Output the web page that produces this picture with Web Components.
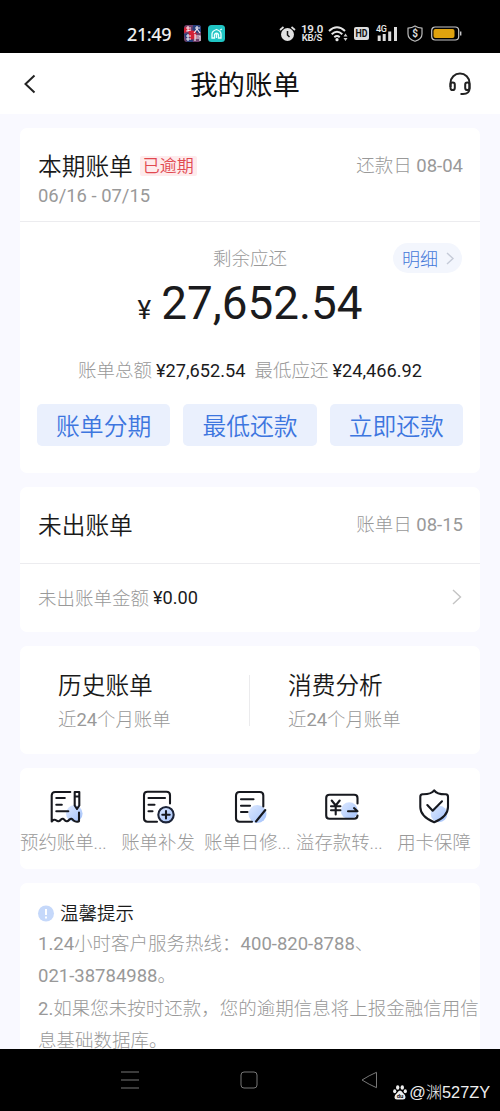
<!DOCTYPE html>
<html lang="zh-CN">
<head>
<meta charset="utf-8">
<title>我的账单</title>
<style>
html,body{margin:0;padding:0}
body{width:500px;height:1111px;overflow:hidden;background:#f9f9ff;font-family:Roboto,"Noto Sans CJK SC",sans-serif;font-size:18.5px;font-weight:300;color:#1c1c1e}
</style>
</head>
<body>
<bill-app></bill-app>
<script>
const define = (name, css, html) => customElements.define(name, class extends HTMLElement {
  constructor() {
    super();
    const t = document.createElement('template');
    t.innerHTML = `<style>*{box-sizing:border-box}svg{display:block;flex:none;overflow:visible}i{font-style:normal;font-weight:400}${css}</style>` + (typeof html === 'function' ? html(this) : html);
    this.attachShadow({mode: 'open'}).appendChild(t.content.cloneNode(true));
  }
});
// Latin digits take the regular weight beside the lighter Chinese text.
const num = s => s.replace(/\d[\d.\/-]*/g, m => `<i>${m}</i>`);

define('status-bar', `
:host{display:flex;align-items:center;height:53px;flex:none;background:#000;color:#e6e6e6;padding:14px 0 0 127px}
.time{font:500 18px/20px "Noto Sans",sans-serif;width:57px;color:#eee;letter-spacing:-.4px}
.speed{text-align:center;width:22px;margin-left:5px;font-family:Roboto,sans-serif}
.speed b{display:block;font-weight:600;font-size:11.500px;line-height:9px;height:9px;letter-spacing:-.2px}.speed b+b{font-size:9.500px;line-height:8px;height:8px;letter-spacing:-.3px}
.speed b{white-space:nowrap}
`, `
<span class="time">21:49</span>
<svg width="17" height="17" viewBox="0 0 17 17"><rect width="17" height="17" rx="3" fill="#70406c"/><path d="M9 0h5a3 3 0 0 1 3 3v4L8 9zM0 9l8-1 1 9H3z" fill="#263f7c"/><path d="M4 5l8 1 1 7-7 2zM0 3l4-2 3 4-7 3z" fill="#d31f35"/><path d="M2 3h5M4 1v6M2 6l5-1M11 3h5M13 1v3l-3 4m3-4 3 4M2 11h5M4 9v7m-2-2h5M11 11h5v5m-5-3h4m-4 3V9" stroke="#f1e9f1" stroke-width="1.2" fill="none"/></svg>
<svg style="margin-left:7px" width="17" height="17" viewBox="0 0 17 17"><rect width="17" height="17" rx="3.5" fill="#20c5c4"/><path d="M4 13V9q0-3 4.500-4.500Q13 6 13 9v4H10.500V9.500Q8.500 7 6.500 9.500V13zM8.500 8v5M12 5l2-1" fill="none" stroke="#e9ffff" stroke-width="1.300"/></svg>
<svg style="margin-left:54px" width="17" height="17" viewBox="0 0 17 17"><circle cx="8.500" cy="9.500" r="6.500" fill="#e0e0e0"/><path d="M1 5l3.500-3M16 5l-3.500-3" stroke="#e0e0e0" stroke-width="1.700"/><path d="M8.500 6v4l2 2" fill="none" stroke="#111" stroke-width="1.500"/></svg>
<span class="speed"><b>19.0</b><b>KB/S</b></span>
<svg style="margin-left:5px" width="21" height="17" viewBox="0 0 21 17"><path d="M1 6q8-7.500 16 0M3.700 9.200q5.300-5 10.600 0M6.300 12.200q2.700-2.400 5.400 0" fill="none" stroke="#e6e6e6" stroke-width="2"/><circle cx="9" cy="14.700" r="1.600" fill="#e6e6e6"/><path d="M15.500 11.500l2-3 2 3zM15.500 13l2 3 2-3z" fill="#ccc"/></svg>
<svg style="margin-left:5px" width="15" height="13" viewBox="0 0 15 13"><rect width="15" height="13" rx="2" fill="#ddd"/><text x="7.500" y="10.200" text-anchor="middle" textLength="12" lengthAdjust="spacingAndGlyphs" font-family="Roboto" font-weight="700" font-size="10" fill="#111">HD</text></svg>
<svg style="margin-left:7px" width="23" height="17" viewBox="0 0 23 17"><text x="0" y="7" font-family="Roboto" font-size="9" font-weight="500" fill="#e6e6e6" textLength="11">4G</text><path d="M3.200 10.500V16M8.200 9V16M13.700 6.500V16M19.500 2V16" stroke="#ddd" stroke-width="3"/></svg>
<svg style="margin-left:8px" width="16" height="17" viewBox="0 0 16 17"><path d="M8 1Q11 3 15 3.200V9q0 5-7 7.300Q1 14 1 9V3.200Q5 3 8 1z" fill="none" stroke="#bbb" stroke-width="1.200"/><text x="8" y="12.300" text-anchor="middle" font-family="Roboto" font-weight="700" font-size="10" fill="#ddd">$</text></svg>
<svg style="margin-left:8px" width="31" height="15" viewBox="0 0 31 15"><rect x=".7" y="1" width="27" height="13" rx="3.500" fill="none" stroke="#c6c6c8" stroke-width="1.200"/><rect x="2.500" y="3" width="21" height="9" rx="2" fill="#dfa20e"/><path d="M29.700 5.500v4" stroke="#c6c6c8" stroke-width="1.400"/></svg>
`);

define('title-bar', `
:host{display:flex;align-items:center;justify-content:space-between;flex:none;height:61px;padding:0 28px 0 24px;background:#fff}
h1{margin:0;font:400 27.4px/40px "Noto Sans CJK SC",sans-serif;color:#111;padding:0 0 1px 6px}
`, `
<svg width="12" height="20" viewBox="0 0 12 20"><path d="M10.500 1.500L1.500 10l9 8.500" fill="none" stroke="#222" stroke-width="2"/></svg>
<h1>我的账单</h1>
<svg width="24" height="24" viewBox="0 0 24 24" fill="none" stroke="#222" stroke-width="2"><path d="M2.500 15V11a9.500 9.500 0 0 1 19 0v5.500q0 5.500-6.500 5.500h-2.500"/><rect x="2.500" y="10.500" width="4.300" height="7.500" rx="2.100"/><rect x="17.200" y="10.500" width="4.300" height="7.500" rx="2.100"/></svg>
`);

define('bill-card', `
:host{display:block;background:#fff;border-radius:7px;margin-bottom:14px;flex:none;overflow:hidden}
`, `<slot></slot>`);

define('card-head', `
:host{display:flex;justify-content:space-between;padding:0 17px 0 18px;border-bottom:1px solid #ececef}
.l{display:flex}h2{margin:0;font:350 23.700px/34px "Noto Sans CJK SC",sans-serif;color:#1a1a1a}
.r{font-size:18.500px;line-height:34px;color:#999;padding-top:1px}
`, e => `<div class="l"><h2>${e.getAttribute('heading')}</h2><slot></slot></div><span class="r">${num(e.getAttribute('note'))}</span>`);

define('overdue-tag', `
:host{display:block;height:20px;margin:8px 0 0 7px;padding:0 3px;background:#feebec;color:#e1484f;font-size:17px;line-height:20px;border-radius:2px;font-weight:350}
`, `<slot></slot>`);

define('current-bill', `
:host{display:block;height:345px}
card-head{height:94px;padding-top:20px;position:relative}
.range{position:absolute;left:18px;top:56px;line-height:24px;font-size:18.400px;color:#999}
.due{display:grid;grid-template-columns:1fr auto 1fr;align-items:center;height:30px;margin:21px 18px 0 18px}
.due .t{grid-column:2;color:#999;margin-top:-2px}
.pill{justify-self:end;display:flex;align-items:center;width:69px;height:30px;border-radius:15px;background:#f3f6fd;color:#4478d9;padding:0 8px 0 9px;justify-content:space-between}
.pill span{font-size:18px}
.amount{display:flex;justify-content:center;align-items:baseline;gap:10px;height:54px;font-weight:400;font-size:45.800px;line-height:54px;margin-top:4px;color:#1b1b1d}
.amount small{font-size:26px}
.sum{display:flex;justify-content:center;white-space:pre;line-height:26px;color:#999;margin-top:27px}
.sum b{font-weight:400;color:#1b1b1d;font-size:18.200px;margin:0 9px 0 4px}.sum b:last-child{margin-right:0}
.acts{display:grid;grid-template-columns:repeat(3,1fr);gap:13px;margin:20px 17px 0 17px}
.acts span{height:42px;border-radius:5px;background:#eaf0fd;color:#3d76df;text-align:center;font-size:23.800px;line-height:47px;font-weight:350}
`, `
<card-head heading="本期账单" note="还款日 08-04"><overdue-tag>已逾期</overdue-tag><span class="range"><i>06/16 - 07/15</i></span></card-head>
<div class="due"><span class="t">剩余应还</span><div class="pill"><span>明细</span><svg width="8" height="13" viewBox="0 0 8 13"><path d="M1 1l6 5.500L1 12" fill="none" stroke="#c5cbd8" stroke-width="1.400"/></svg></div></div>
<div class="amount"><small>¥</small><span>27,652.54</span></div>
<div class="sum"><span>账单总额</span><b>¥27,652.54</b><span>最低应还</span><b>¥24,466.92</b></div>
<div class="acts"><span>账单分期</span><span>最低还款</span><span>立即还款</span></div>
`);

define('pending-bill', `
:host{display:block;height:145px}
card-head{height:77px;padding-top:20px}
.row{display:flex;align-items:center;height:68px;padding:0 18px 2px;color:#999}
b{font-weight:400;color:#1b1b1d;font-size:18.200px;margin:0 auto 0 4px}
`, `
<card-head heading="未出账单" note="账单日 08-15"></card-head>
<div class="row"><span>未出账单金额</span><b>¥0.00</b><svg width="10" height="16" viewBox="0 0 10 16"><path d="M1 1l7.500 7L1 15" fill="none" stroke="#c4c4c4" stroke-width="1.400"/></svg></div>
`);

define('bill-links', `
:host{display:grid;grid-template-columns:1fr 1fr;height:108px;padding-top:21px}
div{padding-left:38px}div+div{position:relative}
div+div::before{content:"";position:absolute;left:-1px;top:8px;width:1px;height:51px;background:#ebebed}
h3{margin:0;font:350 23.700px/34px "Noto Sans CJK SC",sans-serif;color:#1a1a1a}
p{margin:6px 0 0;line-height:26px;font-size:18.400px;color:#999}
`, `<div><h3>历史账单</h3><p>${num('近24个月账单')}</p></div><div><h3>消费分析</h3><p>${num('近24个月账单')}</p></div>`);

const glyphs = {
  reserve: `<circle cx="26.300" cy="25.500" r="8.300"/><path d="M22.300 4H7.200Q3.700 4 3.700 7.500V33.500Q6 30.500 8.500 32.500Q10.500 34.500 13 31.500Q15 29.500 17 32.500Q19 34.500 21.500 31.500Q23.500 29.500 25.500 32.500Q28 34.500 31 33.300V24.500M8.300 10h8.500M8.300 16.700h5.500M8.300 23.300h12M26.700 4h4.600v13.500l-2.300 3.500-2.300-3.500zM26.700 8.500h4.600"/>`,
  reissue: `<circle cx="26" cy="26.700" r="7.700"/><path d="M17 33.700H7.500Q4 33.700 4 30.200V7.200Q4 3.700 7.500 3.700H26.500Q30 3.700 30 7.200V15.500M8.500 10H25M8.500 16.700h6M8.500 23.300h4M26 23v7.400M22.300 26.700h7.400"/><circle cx="26" cy="26.700" r="7.700" style="fill:none;stroke:#1c2438"/>`,
  edit: `<circle cx="25.500" cy="26" r="9"/><path d="M20 33.700H7.500Q4 33.700 4 30.200V7.500Q4 4 7.500 4H27.800Q31.300 4 31.300 7.500V18.500M9 11.300H21.500M9 17.700h9M9 24h6.500M24 33.500L33.300 22"/>`,
  transfer: `<circle cx="25.300" cy="22.700" r="8.500"/><path d="M33.500 15.500V10Q33.500 6.700 30.200 6.700H5.500Q2.200 6.700 2.200 10V27.400Q2.200 30.700 5.500 30.700H30.200Q33.500 30.700 33.500 27.500M7.700 12.500l4 5 4-5M11.700 17.500V26.500M7 18.300h9.400M7 22.200h9.400M24 23.300h9.500l-3.500-3.200"/>`,
  shield: `<circle cx="23" cy="26" r="8.300"/><path d="M18.200 2.300Q15.500 6.500 6.500 6.300Q4.300 6.500 4.300 8.700V19Q4.300 28.500 18.200 34.300Q32 28.500 32 19V8.700Q32 6.500 29.800 6.300Q21 6.500 18.200 2.300zM11.300 17l5.400 5.700L26 13.300"/>`
};
define('service-item', `
:host{display:flex;flex-direction:column;min-width:0;padding-top:20px}
svg{align-self:center}circle{fill:url(#g);stroke:none}path{fill:none;stroke:#17191f;stroke-linecap:round;stroke-linejoin:round}
circle,path{stroke-width:2.100}
span{font-size:18.400px;line-height:26px;margin-top:6px;white-space:nowrap;color:#999;text-align:center}
:host([long]) span{text-align:left}
`, e => `<svg width="36" height="36" viewBox="0 0 36 36"><defs><linearGradient id="g" x1="0" y1="0" x2="1" y2="1"><stop offset="0" stop-color="#dce8ff"/><stop offset="1" stop-color="#a3c2fb"/></linearGradient></defs>${glyphs[e.getAttribute('icon')]}</svg><span>${e.getAttribute('label')}</span>`);

define('service-grid', `:host{display:grid;grid-template-columns:repeat(5,92px);height:101px}`, `
<service-item icon="reserve" label="预约账单..." long></service-item>
<service-item icon="reissue" label="账单补发"></service-item>
<service-item icon="edit" label="账单日修..." long></service-item>
<service-item icon="transfer" label="溢存款转..." long></service-item>
<service-item icon="shield" label="用卡保障"></service-item>`);

define('kind-tips', `
:host{display:block;height:180px;padding:17px 0 0 18px;color:#999}
h4{display:flex;align-items:center;gap:6px;margin:0;font-size:18.500px;line-height:27px;height:27px;font-weight:350;color:#1a1a1a}
h4 span{padding-top:2px}
p{margin:0;line-height:32.400px;white-space:nowrap;font-size:18.500px;position:relative;top:1px}
`, `<h4><svg width="16" height="17" viewBox="0 0 16 17"><circle cx="8" cy="8.500" r="8" fill="#c5d8fa"/><path d="M8 4v6M8 11.500v2" stroke="#fff" stroke-width="2"/></svg><span>温馨提示</span></h4>
<p>${num('1.24小时客户服务热线：400-820-8788、')}</p><p>${num('021-38784988。')}</p><p>${num('2.如果您未按时还款，您的逾期信息将上报金融信用信')}</p><p>息基础数据库。</p>`);

define('system-nav', `
:host{display:grid;grid-template-columns:repeat(3,119.500px) 1fr;justify-items:center;flex:none;height:62px;background:#000;padding-left:70px;position:relative}
svg{margin-top:22px}
.mark{position:absolute;right:10px;top:31px;display:flex;align-items:center;gap:2px;color:#eee;font:300 16.300px/24px "Liberation Sans","Noto Sans CJK SC",sans-serif;white-space:nowrap}.mark svg{margin:0}
`, `
<svg width="18" height="18" viewBox="0 0 18 18"><path d="M0 1h18M0 9h18M0 17h18" stroke="#777" stroke-width="1"/></svg>
<svg width="18" height="18" viewBox="0 0 18 18"><rect x="1" y="1" width="16" height="16" rx="3" fill="none" stroke="#777"/></svg>
<svg width="18" height="18" viewBox="0 0 18 18"><path d="M16.500 1.300v15.400Q9 13.500 2 9 9 4.500 16.500 1.300z" fill="none" stroke="#777" stroke-linejoin="round"/></svg>
<div class="mark"><svg width="14" height="15" viewBox="0 0 14 15" fill="#eee"><ellipse cx="4.700" cy="2.500" rx="1.700" ry="2.300"/><ellipse cx="9.300" cy="2.500" rx="1.700" ry="2.300"/><ellipse cx="1.700" cy="6.300" rx="1.600" ry="2"/><ellipse cx="12.300" cy="6.300" rx="1.600" ry="2"/><path d="M7 5.500q1.600 0 3 2.500 2.500 2 2.500 4 0 2.700-3 2.500h-5q-3 .2-3-2.500 0-2 2.500-4 1.400-2.500 3-2.500z"/><text x="7" y="12.800" text-anchor="middle" font-size="6" font-family="Roboto" font-weight="700" fill="#111">du</text></svg><span>@渊527ZY</span></div>
`);

define('bill-app', `
:host{display:flex;flex-direction:column;width:500px;height:1111px}
main{display:flex;flex-direction:column;flex:1;min-height:0;overflow:hidden;padding:14px 20px 0;background:#f9f9ff}
`, `
<status-bar></status-bar><title-bar></title-bar>
<main>
<bill-card><current-bill></current-bill></bill-card>
<bill-card><pending-bill></pending-bill></bill-card>
<bill-card><bill-links></bill-links></bill-card>
<bill-card><service-grid></service-grid></bill-card>
<bill-card><kind-tips></kind-tips></bill-card>
</main>
<system-nav></system-nav>`);
</script>
</body>
</html>
